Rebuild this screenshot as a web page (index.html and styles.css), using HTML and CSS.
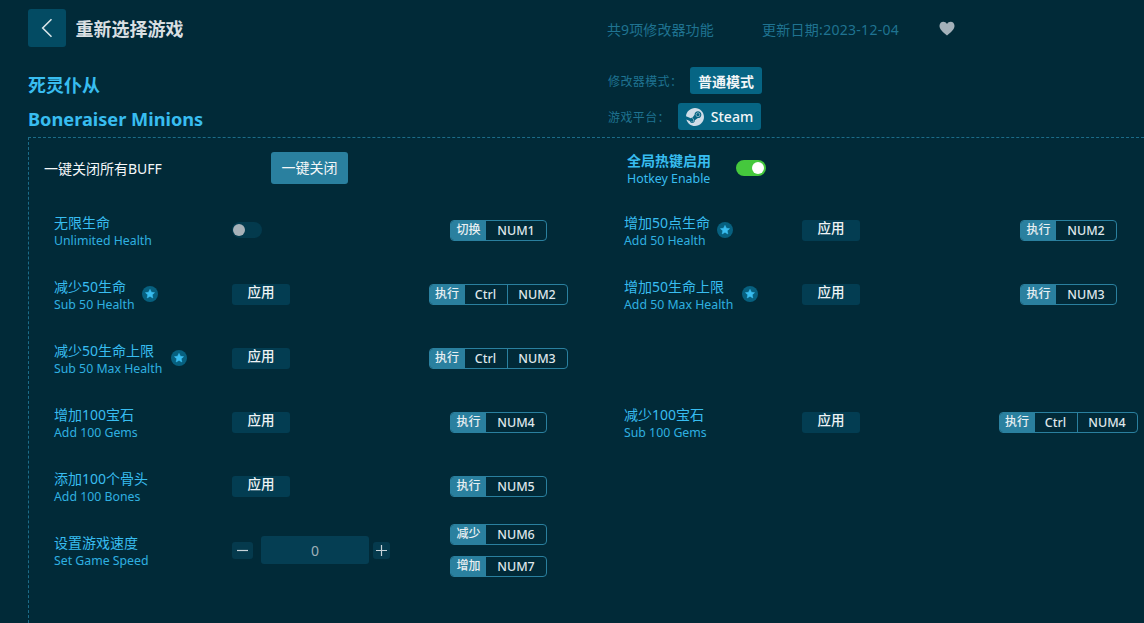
FILE: index.html
```html
<!DOCTYPE html>
<html lang="zh-CN">
<head>
<meta charset="utf-8">
<title>重新选择游戏</title>
<link rel="stylesheet" href="styles.css">
</head>
<body>
<svg class="defs" width="0" height="0" aria-hidden="true"><defs>
<g id="star"><circle cx="8" cy="8" r="8" fill="#07607f"/><path d="M8 3.4l1.4 2.9 3.1.4-2.3 2.1.6 3.1L8 10.3l-2.8 1.6.6-3.1-2.3-2.1 3.1-.4z" fill="#39bdf0" stroke="#39bdf0" stroke-width=".6" stroke-linejoin="round"/></g>
</defs></svg>
<header class="top">
  <div class="top-left">
    <button class="back"><svg width="14" height="20" viewBox="0 0 14 20"><path d="M11.500 1.300 2.700 10l8.800 8.700" fill="none" stroke="#d9e4e8" stroke-width="1.600"/></svg></button>
    <h1>重新选择游戏</h1>
  </div>
  <div class="top-meta">
    <span class="count">共9项修改器功能</span>
    <span class="date">更新日期:2023-12-04</span>
    <svg class="heart" width="16" height="15" viewBox="0 0 16 15"><path d="M8 14.500C3 10.500.5 8 .5 4.800.5 2.300 2.300.7 4.300.7 5.800.7 7.200 1.500 8 3c.8-1.500 2.200-2.300 3.700-2.300 2 0 3.800 1.600 3.800 4.100C15.500 8 13 10.500 8 14.500z" fill="#a4b1ba"/></svg>
  </div>
</header>
<section class="game">
  <div class="names">
    <h2 class="cn">死灵仆从</h2>
    <h2 class="en">Boneraiser Minions</h2>
  </div>
  <div class="modes">
    <div class="mode-row"><span class="mode-label">修改器模式：</span><span class="chip">普通模式</span></div>
    <div class="mode-row plat"><span class="mode-label">游戏平台：</span><span class="chip steam"><svg width="18" height="18" viewBox="0 0 24 24"><path fill="#cfdde8" d="M11.979 0C5.678 0 .511 4.86.022 11.037l6.432 2.658c.545-.371 1.203-.59 1.912-.59.063 0 .125.004.188.006l2.861-4.142V8.910c0-2.495 2.028-4.524 4.524-4.524 2.494 0 4.524 2.031 4.524 4.527s-2.030 4.525-4.524 4.525h-.105l-4.076 2.911c0 .052.004.105.004.159 0 1.875-1.515 3.396-3.390 3.396-1.635 0-3.016-1.173-3.331-2.727L.436 15.270C1.862 20.307 6.486 24 11.979 24c6.627 0 11.999-5.373 11.999-12S18.605 0 11.979 0zM7.540 18.210l-1.473-.61c.262.543.714.999 1.314 1.250 1.297.539 2.793-.076 3.332-1.375.263-.63.264-1.319.005-1.949s-.75-1.121-1.377-1.383c-.624-.26-1.290-.249-1.878-.03l1.523.63c.956.4 1.409 1.500 1.009 2.455-.397.957-1.497 1.410-2.454 1.012H7.540zm11.415-9.303c0-1.662-1.353-3.015-3.015-3.015-1.665 0-3.015 1.353-3.015 3.015 0 1.665 1.350 3.015 3.015 3.015 1.663 0 3.015-1.350 3.015-3.015zm-5.273-.005c0-1.252 1.013-2.266 2.265-2.266 1.249 0 2.266 1.014 2.266 2.266 0 1.251-1.017 2.265-2.266 2.265-1.253 0-2.265-1.014-2.265-2.265z"/></svg>Steam</span></div>
  </div>
</section>
<main class="panel">
  <div class="panel-head">
    <div class="all-off"><span class="all-label">一键关闭所有BUFF</span><button class="off-btn">一键关闭</button></div>
    <div class="hotkey">
      <div class="hk-text"><div class="hk-cn">全局热键启用</div><div class="hk-en">Hotkey Enable</div></div>
      <span class="toggle on"><i></i></span>
    </div>
  </div>
  <div class="grid">
    <div class="item">
      <div class="name"><div class="cn-name">无限生命</div><div class="en-name">Unlimited Health</div></div>
      <div class="ctrl"><span class="toggle off"><i></i></span></div>
      <div class="keys"><div class="kb"><b>切换</b><span class="k">NUM1</span></div></div>
    </div>
    <div class="item">
      <div class="name star-name"><div><div class="cn-name">增加50点生命</div><div class="en-name">Add 50 Health</div></div><svg class="star" viewBox="0 0 16 16"><use href="#star"/></svg></div>
      <div class="ctrl"><button class="apply">应用</button></div>
      <div class="keys"><div class="kb"><b>执行</b><span class="k">NUM2</span></div></div>
    </div>
    <div class="item">
      <div class="name star-name"><div><div class="cn-name">减少50生命</div><div class="en-name">Sub 50 Health</div></div><svg class="star" viewBox="0 0 16 16"><use href="#star"/></svg></div>
      <div class="ctrl"><button class="apply">应用</button></div>
      <div class="keys"><div class="kb three"><b>执行</b><span class="k ctrlk">Ctrl</span><span class="k">NUM2</span></div></div>
    </div>
    <div class="item">
      <div class="name star-name wide"><div><div class="cn-name">增加50生命上限</div><div class="en-name">Add 50 Max Health</div></div><svg class="star" viewBox="0 0 16 16"><use href="#star"/></svg></div>
      <div class="ctrl"><button class="apply">应用</button></div>
      <div class="keys"><div class="kb"><b>执行</b><span class="k">NUM3</span></div></div>
    </div>
    <div class="item">
      <div class="name star-name wide"><div><div class="cn-name">减少50生命上限</div><div class="en-name">Sub 50 Max Health</div></div><svg class="star" viewBox="0 0 16 16"><use href="#star"/></svg></div>
      <div class="ctrl"><button class="apply">应用</button></div>
      <div class="keys"><div class="kb three"><b>执行</b><span class="k ctrlk">Ctrl</span><span class="k">NUM3</span></div></div>
    </div>
    <div class="item empty"></div>
    <div class="item">
      <div class="name"><div class="cn-name">增加100宝石</div><div class="en-name">Add 100 Gems</div></div>
      <div class="ctrl"><button class="apply">应用</button></div>
      <div class="keys"><div class="kb"><b>执行</b><span class="k">NUM4</span></div></div>
    </div>
    <div class="item">
      <div class="name"><div class="cn-name">减少100宝石</div><div class="en-name">Sub 100 Gems</div></div>
      <div class="ctrl"><button class="apply">应用</button></div>
      <div class="keys"><div class="kb three"><b>执行</b><span class="k ctrlk">Ctrl</span><span class="k">NUM4</span></div></div>
    </div>
    <div class="item">
      <div class="name"><div class="cn-name">添加100个骨头</div><div class="en-name">Add 100 Bones</div></div>
      <div class="ctrl"><button class="apply">应用</button></div>
      <div class="keys"><div class="kb"><b>执行</b><span class="k">NUM5</span></div></div>
    </div>
    <div class="item empty"></div>
    <div class="item">
      <div class="name"><div class="cn-name">设置游戏速度</div><div class="en-name">Set Game Speed</div></div>
      <div class="ctrl stepper">
        <button class="step minus"><svg width="11" height="11" viewBox="0 0 11 11"><path d="M0 5.500h11" stroke="#c8d3d9" stroke-width="1.200"/></svg></button>
        <span class="value">0</span>
        <button class="step plus"><svg width="11" height="11" viewBox="0 0 11 11"><path d="M0 5.500h11M5.500 0v11" stroke="#c8d3d9" stroke-width="1.200"/></svg></button>
      </div>
      <div class="keys two">
        <div class="kb"><b>减少</b><span class="k">NUM6</span></div>
        <div class="kb"><b>增加</b><span class="k">NUM7</span></div>
      </div>
    </div>
  </div>
</main>
</body>
</html>
```
FILE: styles.css
```css
* { box-sizing: border-box; }
html, body { margin: 0; height: 623px; overflow: hidden; }
body {
  background: #012a38;
  font-family: "Noto Sans", "Noto Sans CJK SC", sans-serif;
  color: #fff;
}
.defs { position: absolute; }
button { font-family: inherit; border: 0; padding: 0; color: inherit; }
h1, h2 { margin: 0; }

.top { display: flex; height: 58px; padding: 9px 0 0 28px; }
.top-left { display: flex; align-items: center; width: 579px; height: 38px; }
.back {
  width: 38px; height: 38px; border-radius: 3px; background: #034b63;
  display: flex; align-items: center; justify-content: center; margin-right: 10px;
}
h1 { font-size: 18px; line-height: 24px; font-weight: 700; color: #d9dfe2; padding-top: 2px; margin-left: -.5px; }
.top-meta { display: flex; align-items: center; height: 39px; font-size: 14px; color: #1f7391; }
.count { width: 155px; letter-spacing: .1px; }
.date { width: 177px; letter-spacing: .28px; }
.heart { display: block; }

.game { display: flex; height: 79px; padding-left: 28px; }
.names { width: 580px; }
.cn { font-size: 18px; line-height: 24px; margin-top: 15px; color: #38bdf0; }
.en { font-size: 18.200px; line-height: 24px; margin-top: 10px; color: #38bdf0; }
.modes { padding-top: 9px; }
.mode-row { display: flex; align-items: center; height: 27px; }
.plat { margin-top: 9px; }
.mode-label { width: 82px; font-size: 12px; letter-spacing: .4px; color: #1f7391; }
.plat .mode-label { width: 70px; }
.chip {
  display: flex; align-items: center; justify-content: center; height: 27px;
  width: 72px; background: #066584; border-radius: 3px;
  font-size: 14px; font-weight: 700; color: #f2f6f8;
}
.steam { width: 83px; gap: 7px; font-size: 14px; font-weight: 500; }

.panel {
  margin-left: 28px; height: 486px;
  border-top: 1px dashed #1c6c89; border-left: 1px dashed #1c6c89;
}
.panel-head { display: flex; height: 51px; padding: 13px 0 0 15px; }
.all-off { display: flex; align-items: center; width: 583px; height: 33px; }
.all-label { width: 227px; font-size: 14px; color: #f4f7f8; }
.off-btn {
  width: 77px; height: 32px; border-radius: 3px; background: #2a809f;
  font-size: 14px; color: #f4f7f8; padding-bottom: 1px;
}
.hotkey { display: flex; align-items: flex-start; gap: 25px; height: 33px; padding-top: 1px; }
.hk-cn { font-size: 14px; line-height: 18px; font-weight: 700; color: #38bdf0; }
.hk-en { font-size: 12.400px; line-height: 18px; color: #38bdf0; }
.hotkey .toggle { margin-top: 8px; }

.toggle { display: flex; align-items: center; width: 30px; height: 16px; border-radius: 8px; padding: 0 2px; }
.toggle i { width: 12px; height: 12px; border-radius: 50%; display: block; }
.toggle.on { background: #45c83d; justify-content: flex-end; }
.toggle.on i { background: #fff; }
.toggle.off { background: #033a4d; padding: 0 1px; }
.toggle.off i { background: #a7b1b8; }

.grid { display: grid; grid-template-columns: 570px 570px; padding-left: 25px; margin-top: 9px; }
.item { display: grid; grid-template-columns: 178px 170px 193px; height: 64px; align-items: center; }
.name { min-width: 0; padding-top: 3px; }
.star-name { display: flex; align-items: center; gap: 7px; }
.star-name.wide { gap: 9px; }
.cn-name { font-size: 14px; line-height: 18px; color: #38bdf0; }
.en-name { font-size: 12.300px; line-height: 18px; color: #2fb0e0; }
.star { width: 16px; height: 16px; flex: none; margin-top: -3px; }

.ctrl { display: flex; align-items: center; }
.apply {
  width: 58px; height: 21px; border-radius: 3px; background: #033d52;
  font-size: 13.500px; line-height: 17px; font-weight: 500; color: #eef3f5; padding-bottom: 4px;
}
.stepper { gap: 8px; }
.step { width: 21px; height: 17px; border-radius: 3px; background: #053a4d; display: flex; align-items: center; justify-content: center; }
.step.plus { width: 17px; margin-left: -4px; }
.value {
  width: 108px; height: 28px; border-radius: 3px; background: #053e53;
  display: flex; align-items: center; justify-content: center;
  font-size: 14px; color: #9fb0b8;
}

.keys { display: flex; flex-direction: column; align-items: center; gap: 11px; }
.kb {
  display: flex; height: 21px; border: 1px solid #2a809f; border-radius: 4px;
  font-size: 12.500px; font-weight: 500; color: #dfe6ea; overflow: hidden;
}
.kb.three { margin-left: -1px; }
.kb b { width: 35px; background: #2a809f; font-size: 12px; font-weight: 500; line-height: 17px; text-align: center; color: #e8eff2; }
.k { width: 60px; line-height: 19px; text-align: center; }
.three .k { width: 59px; }
.three .ctrlk { width: 43px; border-right: 1px solid #2a809f; }
```
